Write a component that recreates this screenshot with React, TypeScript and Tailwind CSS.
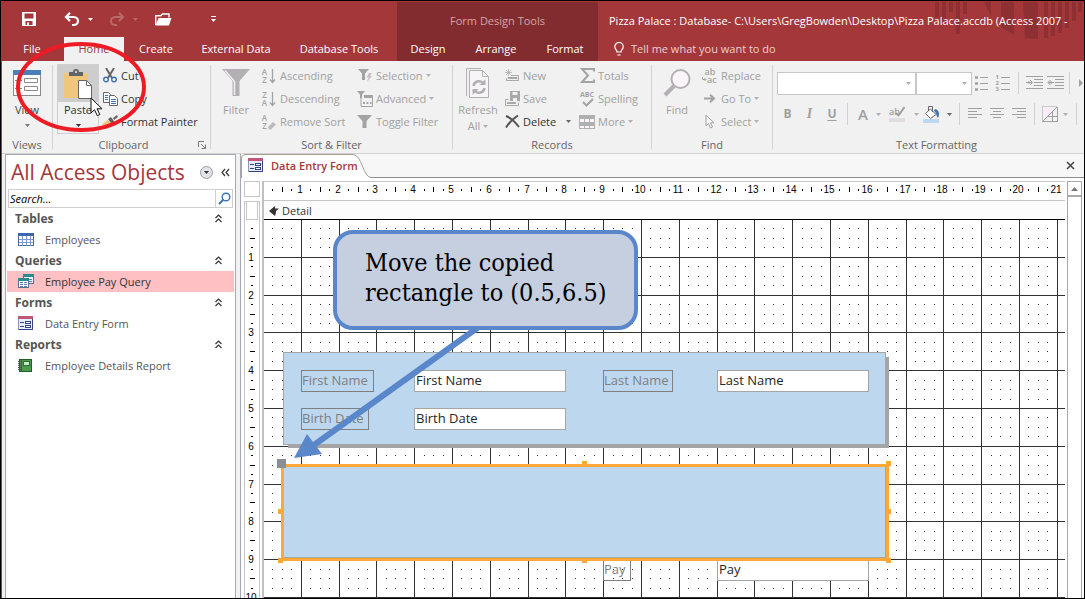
import type { ReactNode } from 'react'

const CM = 37.8

const navGroups = [
  { title: 'Tables', item: 'Employees', icon: 'table' },
  { title: 'Queries', item: 'Employee Pay Query', icon: 'query', selected: true },
  { title: 'Forms', item: 'Data Entry Form', icon: 'form' },
  { title: 'Reports', item: 'Employee Details Report', icon: 'report' },
]

function Caret({ className = 'text-[#b0b0b0]' }: { className?: string }) {
  return (
    <svg width="5" height="3" viewBox="0 0 5 3" className={`shrink-0 ${className}`}>
      <path d="M0 0h5L2.5 3z" fill="currentColor" />
    </svg>
  )
}

function Chevrons({ left = false }: { left?: boolean }) {
  return (
    <svg width="9" height="9" viewBox="0 0 9 9" fill="none" stroke="#333" strokeWidth="1.2">
      {left ? <path d="M4 1L1 4.5L4 8M8 1L5 4.5L8 8" /> : <path d="M1.5 4L4.5 1L7.5 4M1.5 8L4.5 5L7.5 8" />}
    </svg>
  )
}

function NavIcon({ type }: { type: string }) {
  if (type === 'table') {
    return (
      <svg width="16" height="14" viewBox="0 0 16 14">
        <rect x=".5" y=".5" width="15" height="12" fill="#fff" stroke="#4a68a0" />
        <rect x="0" y="0" width="16" height="3" fill="#3f66ad" />
        <path d="M1 6.5h14M1 9.5h14M4.5 3v10M8.5 3v10M12.5 3v10" stroke="#7d98c6" />
      </svg>
    )
  }
  if (type === 'query') {
    return (
      <svg width="16" height="15" viewBox="0 0 16 15">
        <rect x="5.5" y=".5" width="10" height="9" fill="#e8f0fa" stroke="#5b7090" />
        <rect x="5" y="0" width="11" height="3" fill="#2a8a8c" />
        <path d="M7 5.5h7M7 7.5h7" stroke="#5b7fae" />
        <rect x=".5" y="4.5" width="10" height="9" fill="#fff" stroke="#5b7090" />
        <rect x="0" y="4" width="11" height="3" fill="#2a8a8c" />
        <path d="M2 8.5h3M6 8.5h3M2 10.5h3M6 10.5h3M2 12.5h3M6 12.5h3" stroke="#5b7fae" />
      </svg>
    )
  }
  if (type === 'report') {
    return (
      <svg width="14" height="14" viewBox="0 0 14 14">
        <rect x="1.5" y=".5" width="12" height="12" fill="#4c9a4c" stroke="#22602b" />
        <rect x="5.5" y="2.5" width="6" height="4" fill="#cfe8c8" stroke="#2c6b33" />
        <path d="M3.5 1v11" stroke="#2c6b33" />
        <path d="M0 2.5h3M0 4.5h3M0 6.5h3M0 8.5h3M0 10.5h3" stroke="#555" />
      </svg>
    )
  }
  return (
    <svg width="16" height="15" viewBox="0 0 16 15">
      <rect x=".5" y=".5" width="14" height="13" fill="#e6ecfa" stroke="#8795bd" />
      <path d="M14.5 3v10.500H1" stroke="#33447e" fill="none" />
      <rect x="0" y="0" width="15" height="3" fill="#c2557c" />
      <path d="M2 6.500h4M2 10.500h4" stroke="#33447e" />
      <rect x="7.500" y="5.500" width="5" height="2" fill="#fff" stroke="#33447e" />
      <rect x="7.500" y="9.500" width="5" height="2" fill="#fff" stroke="#33447e" />
    </svg>
  )
}

function Tab({ width, children, active = false }: { width: string; children: ReactNode; active?: boolean }) {
  return (
    <button className={`h-full shrink-0 text-center ${width} ${active ? 'bg-[#f1f1f1] text-[#a4373a]' : 'text-white'}`}>
      {children}
    </button>
  )
}

function TitleBar() {
  return (
    <header className="flex h-[60px] shrink-0 bg-[#a4373a]">
      <div className="flex w-[395px] shrink-0 flex-col">
        <div className="flex h-9 items-center pl-5 text-white">
          <button aria-label="Save">
            <svg width="14" height="14" viewBox="0 0 14 14">
              <path d="M0 0h14v14H0z" fill="#fff" />
              <path d="M2.500 1.500h9v5h-9zM3.500 9h7v4h-7z" fill="#a4373a" />
              <path d="M5 10.500h2V13H5z" fill="#fff" />
            </svg>
          </button>
          <button aria-label="Undo" className="ml-7 flex items-center gap-2">
            <svg width="16" height="14" viewBox="0 0 16 14" fill="none" stroke="#fff" strokeWidth="2.2">
              <path d="M6 0.8L2 5L6 9M2.2 5H9.5C15.5 5 15.5 13 9.5 13H8" />
            </svg>
            <Caret className="text-white" />
          </button>
          <button aria-label="Redo" className="ml-4 flex items-center gap-2">
            <svg width="16" height="14" viewBox="0 0 16 14" fill="none" stroke="#bd686a" strokeWidth="2">
              <path d="M10 0.8L14 5L10 9M13.8 5H6.5C.5 5 .5 13 6.5 13H8" />
            </svg>
            <Caret className="text-[#bd686a]" />
          </button>
          <button aria-label="Open" className="ml-[17px]">
            <svg width="17" height="13" viewBox="0 0 17 13">
              <path d="M.7 12V2.7h5L7.500 1h6.500v3.500" fill="none" stroke="#fff" strokeWidth="1.4" />
              <path d="M3.500 5H16.500L14 12.500H.5z" fill="#fff" />
            </svg>
          </button>
          <button aria-label="Customize Quick Access Toolbar" className="ml-[39px] flex flex-col items-center gap-0.5">
            <span className="h-px w-[5px] bg-white" />
            <Caret className="text-white" />
          </button>
        </div>
        <nav className="flex h-6 pl-2">
          <Tab width="w-[44px]">File</Tab>
          <span className="w-2.5" />
          <Tab width="w-[60px]" active>Home</Tab>
          <Tab width="w-[64px]">Create</Tab>
          <Tab width="w-[96px]">External Data</Tab>
          <Tab width="w-[110px]">Database Tools</Tab>
        </nav>
      </div>

      <div className="mt-px flex w-[201px] shrink-0 flex-col bg-[#822c2f]">
        <p className="flex h-[35px] items-center justify-center pt-0.5 text-[#d5a3a4]">Form Design Tools</p>
        <nav className="flex h-6">
          <Tab width="w-[62px]">Design</Tab>
          <Tab width="w-[74px]">Arrange</Tab>
          <Tab width="w-[64px]">Format</Tab>
        </nav>
      </div>

      <div className="relative flex min-w-0 flex-1 flex-col">
        <svg width="149" height="38" viewBox="0 0 149 38" className="absolute top-px right-0" fill="#8e3033">
          <path d="M0 0h4v15H0zM7 0h4v21H7zM14 0h4v10h-4zM21 0h4v32h-4zM28 0h4v12h-4zM49 0h7v14zM66 0h13v33l-13-8zM88 0h15v37l-13-1zM109 0h4v36h-4zM116 0h4v34h-4zM123 0h4v31h-4zM130 0h4v26h-4zM137 0h4v19h-4zM143 0h4v10h-4z" />
        </svg>
        <h1 className="relative flex h-9 items-center overflow-hidden pt-1 pl-[11px] whitespace-nowrap text-white">
          Pizza Palace : Database- C:\Users\GregBowden\Desktop\Pizza Palace.accdb (Access 2007 -
        </h1>
        <button className="flex h-6 items-center gap-[7px] pl-4 text-[#edcfd0]">
          <svg width="10" height="14" viewBox="0 0 10 14" fill="none" stroke="#fff" strokeWidth="1.2">
            <path d="M3 10C3 8 .8 7.300 .8 4.700a4.200 4.200 0 0 1 8.400 0C9.200 7.300 7 8 7 10zM3.300 13h3.400" />
          </svg>
          Tell me what you want to do
        </button>
      </div>
    </header>
  )
}

function Group({ label, width, children, launcher = false }: { label: string; width: string; children: ReactNode; launcher?: boolean }) {
  return (
    <section className={`flex shrink-0 ${width}`}>
      <div className="flex min-w-0 flex-1 flex-col">
        <div className="flex h-[74px] pt-[3px]">{children}</div>
        <div className="flex h-[18px] items-center justify-center pt-px text-[#666]">
          <span className={launcher ? 'flex-1 pr-1 text-center' : ''}>{label}</span>
          {launcher && (
            <button aria-label="Clipboard options" className="mr-1">
              <svg width="8" height="8" viewBox="0 0 8 8" fill="none" stroke="#777">
                <path d="M.5 6V.5H6M3 3l4 4M7.500 3.500v4h-4" />
              </svg>
            </button>
          )}
        </div>
      </div>
      <div className="my-1 w-px bg-[#d2d2d2]" />
    </section>
  )
}

function Small({ icon, children, caret = false, dark = false }: { icon: ReactNode; children: ReactNode; caret?: boolean; dark?: boolean }) {
  return (
    <button className={`flex h-[23px] items-center gap-[3px] whitespace-nowrap ${dark ? 'text-[#333]' : 'text-[#a0a0a0]'}`}>
      <span className="flex w-4 shrink-0 justify-center">{icon}</span>
      <span>{children}</span>
      {caret && <Caret />}
    </button>
  )
}

function Large({ icon, children, dark = false }: { icon: ReactNode; children: ReactNode; dark?: boolean }) {
  return (
    <button className={`flex w-[50px] shrink-0 flex-col items-center ${dark ? 'text-[#444]' : 'text-[#a0a0a0]'}`}>
      <span className="flex h-[38px] items-center">{icon}</span>
      {children}
    </button>
  )
}

function SortIcon({ top, bottom, eraser = false }: { top: string; bottom: string; eraser?: boolean }) {
  return (
    <span className="flex w-4">
      <span className="flex w-[7px] flex-col text-center text-[8px] leading-[8px] font-semibold text-[#a3a3a3]">
        <span>{top}</span>
        <span>{bottom}</span>
      </span>
      <svg width="9" height="16" viewBox="0 0 9 16">
        {eraser ? (
          <path d="M0 13l5-5l3 2.500l-5 5H1z" fill="#bbb" />
        ) : (
          <path d="M4.500 1v13M2 11.500l2.500 3l2.500-3" fill="none" stroke="#a3a3a3" strokeWidth="1.300" />
        )}
      </svg>
    </span>
  )
}

function Funnel({ extra }: { extra?: 'bolt' | 'window' }) {
  if (extra === 'window') {
    return (
      <svg width="16" height="16" viewBox="0 0 16 16">
        <path d="M0 0h8L5 3.500V7H3V3.500z" fill="#a3a3a3" />
        <path d="M4 7v8.500h11.500v-11H8" fill="none" stroke="#a3a3a3" />
        <path d="M7 4h8.500v3H7zM6 11h2v2H6zM9.500 11h2v2h-2zM13 11h1.500v2H13z" fill="#a3a3a3" />
      </svg>
    )
  }
  return (
    <svg width="16" height="15" viewBox="0 0 16 15">
      <path d={extra ? 'M1 1h11L8 5.500V12H5V5.500z' : 'M0 1h15L9.500 7v7h-4V7z'} fill="#a3a3a3" />
      {extra && <path d="M12 5h3l-2 3h2l-5 6l1.500-4.500H9.500z" fill="#c5c0c5" />}
    </svg>
  )
}

function Lines({ rows }: { rows: string }) {
  return (
    <svg width="18" height="14" viewBox="0 0 18 14" fill="none" stroke="#a0a0a0" strokeWidth="1">
      <path d={rows} />
    </svg>
  )
}

function Divider() {
  return <span className="h-[22px] w-px shrink-0 bg-[#d0d0d0]" />
}

function Ribbon() {
  return (
    <div className="flex h-[93px] shrink-0 overflow-hidden border-b border-[#d2d2d2] bg-[#f1f1f1]">
      <Group label="Views" width="w-[51px]">
        <Large
          dark
          icon={
            <svg width="28" height="26" viewBox="0 0 28 26" fill="none" stroke="#8a8a8a">
              <rect x=".5" y=".5" width="27" height="25" fill="#fff" />
              <path d="M0 0h28v5H0z" fill="#4a7fb8" stroke="none" />
              <path d="M2 10.500h7M2 18.500h7M11.500 8.500h13v4h-13zM11.500 16.500h13v4h-13z" />
            </svg>
          }
        >
          View
          <Caret className="mt-1.5 text-[#777]" />
        </Large>
      </Group>

      <Group label="Clipboard" width="w-[158px]" launcher>
        <button className="ml-1 flex h-[70px] w-[42px] shrink-0 flex-col items-center border border-[#cfcfcf] text-[#333]">
          <span className="flex h-[37px] w-full items-center justify-center bg-[#cdcdcd]">
            <svg width="28" height="30" viewBox="0 0 28 30">
              <path d="M0 4h24v25H0z" fill="#eec77c" />
              <path d="M5 7V3h4a3 3 0 0 1 6 0h4v4z" fill="#5f6368" />
              <circle cx="12" cy="3" r="1.200" fill="#cdcdcd" />
              <path d="M14.500 11.500h8l5 5v13h-13z" fill="#fff" stroke="#666" />
              <path d="M22.500 11.500v5h5" fill="none" stroke="#666" />
            </svg>
          </span>
          Paste
          <Caret className="mt-1.5 text-[#333]" />
        </button>
        <div className="ml-[3px] flex flex-col">
          <Small
            dark
            icon={
              <svg width="14" height="15" viewBox="0 0 14 15" fill="none">
                <path d="M3 0l6 10M11 0L5 10" stroke="#666" strokeWidth="2" />
                <circle cx="3" cy="11.500" r="2.300" stroke="#3f74ae" strokeWidth="1.400" />
                <circle cx="11" cy="11.500" r="2.300" stroke="#3f74ae" strokeWidth="1.400" />
              </svg>
            }
          >
            Cut
          </Small>
          <Small
            dark
            icon={
              <svg width="15" height="14" viewBox="0 0 15 14" fill="#fff" stroke="#666">
                <path d="M.5.5h5l2 2v8h-7z" />
                <path d="M6.500 3.500h5l3 3v7h-8z" />
                <path d="M2 3.500h3M2 5.500h3M2 7.500h3M8 7.500h5M8 9.500h5M8 11.500h5" stroke="#3f74ae" />
              </svg>
            }
          >
            Copy
          </Small>
          <Small
            dark
            icon={
              <svg width="16" height="14" viewBox="0 0 16 14">
                <path d="M0 9l6-4l4 5l-5 4z" fill="#eec77c" />
                <path d="M6 4l3-2l5 7l-3 2zM11 3l4-3l1 2l-4 3z" fill="#666" />
              </svg>
            }
          >
            Format Painter
          </Small>
        </div>
      </Group>

      <Group label="Sort & Filter" width="w-[242px]">
        <Large
          icon={
            <svg width="28" height="28" viewBox="0 0 28 28">
              <path d="M0 0h28L17.500 12v15h-7V12z" fill="#b3b0b3" />
              <path d="M3 1.500L12.500 12.500V26" fill="none" stroke="#efefef" strokeWidth="1.500" />
            </svg>
          }
        >
          Filter
        </Large>
        <div className="flex w-24 shrink-0 flex-col">
          <Small icon={<SortIcon top="A" bottom="Z" />}>Ascending</Small>
          <Small icon={<SortIcon top="Z" bottom="A" />}>Descending</Small>
          <Small icon={<SortIcon top="A" bottom="Z" eraser />}>Remove Sort</Small>
        </div>
        <div className="flex flex-col">
          <Small caret icon={<Funnel extra="bolt" />}>Selection</Small>
          <Small caret icon={<Funnel extra="window" />}>Advanced</Small>
          <Small icon={<Funnel />}>Toggle Filter</Small>
        </div>
      </Group>

      <Group label="Records" width="w-[199px]">
        <Large
          icon={
            <svg width="26" height="31" viewBox="0 0 26 31" fill="none" stroke="#b3b0b3">
              <path d="M16 .5H1.500V28" />
              <path d="M4.500 2.500h13l6 6v21h-19z" fill="#f8f5f8" />
              <path d="M17.500 2.500v6h6" />
              <path d="M8.500 18a5.500 5.500 0 0 1 9.500-3M19.500 20a5.500 5.500 0 0 1-9.500 3" strokeWidth="2.500" />
              <path d="M20.500 11v6h-6zM7.500 27v-6h6z" fill="#b3b0b3" stroke="none" />
            </svg>
          }
        >
          Refresh
          <span className="flex items-center gap-[3px]">All <Caret /></span>
        </Large>
        <div className="ml-px flex w-[75px] shrink-0 flex-col">
          <Small
            icon={
              <svg width="14" height="13" viewBox="0 0 14 13" fill="none" stroke="#a8a8a8">
                <path d="M3.500 0v7M0 3.500h7M1 1l5 5M6 1L1 6" strokeWidth=".7" />
                <path d="M6 6.500h7.500v5h-12v-2" />
                <path d="M3 8.500h9v1H3z" fill="#a8a8a8" />
              </svg>
            }
          >
            New
          </Small>
          <Small
            icon={
              <svg width="15" height="15" viewBox="0 0 15 15">
                <path d="M5 0h10v10H5z" fill="#a8a8a8" />
                <path d="M7.500 1h5v3h-5zM8 7h4v3H8z" fill="#f1f1f1" />
                <path d="M3.500 8.500h-3v6h13v-3" fill="none" stroke="#a8a8a8" />
                <path d="M2 11h9v2H2z" fill="#a8a8a8" />
              </svg>
            }
          >
            Save
          </Small>
          <div className="flex items-center justify-between pr-2">
            <Small
              dark
              icon={
                <svg width="15" height="13" viewBox="0 0 15 13" fill="none" stroke="#555" strokeWidth="2">
                  <path d="M1 1c5 2 9 6 13 11M13 .5C9 3 4 8 1 12.500" />
                </svg>
              }
            >
              Delete
            </Small>
            <button aria-label="Delete options"><Caret className="text-[#666]" /></button>
          </div>
        </div>
        <div className="flex flex-col">
          <Small
            icon={
              <svg width="15" height="15" viewBox="0 0 15 15" fill="none" stroke="#a3a3a3" strokeWidth="2">
                <path d="M14 3.500V1H2l6 6.500L2 14h12v-2.500" />
              </svg>
            }
          >
            Totals
          </Small>
          <Small
            icon={
              <span className="flex flex-col items-center">
                <span className="text-[7px] leading-[7px] font-bold text-[#a3a3a3]">ABC</span>
                <svg width="13" height="9" viewBox="0 0 13 9">
                  <path d="M2 4l3.500 3.500L12 1" fill="none" stroke="#a3a3a3" strokeWidth="2" />
                </svg>
              </span>
            }
          >
            Spelling
          </Small>
          <Small
            caret
            icon={
              <svg width="16" height="14" viewBox="0 0 16 14" fill="none" stroke="#b0b0b0">
                <rect x=".5" y=".5" width="15" height="13" fill="#faf6fa" />
                <path d="M0 0h16v4H0zM0 7.500h16v3H0z" fill="#b0b0b0" stroke="none" />
                <path d="M0 7.500h16M0 10.500h16M5.500 4v10M10.500 4v10" />
              </svg>
            }
          >
            More
          </Small>
        </div>
      </Group>

      <Group label="Find" width="w-[121px]">
        <Large
          icon={
            <svg width="28" height="28" viewBox="0 0 28 28" fill="none" stroke="#b3b0b3">
              <circle cx="17.500" cy="10" r="9" fill="#f9f5f9" strokeWidth="2" />
              <path d="M11 17L2 26" strokeWidth="4" />
            </svg>
          }
        >
          Find
        </Large>
        <div className="flex flex-col">
          <Small
            icon={
              <span className="flex w-4 flex-col text-[9px] leading-[8px] font-semibold text-[#a3a3a3]">
                <span>ab</span>
                <span className="flex items-center">
                  <svg width="5" height="6" viewBox="0 0 5 6" fill="none" stroke="#a3a3a3" className="shrink-0">
                    <path d="M.5 0v2.500h3M2.500 1l1.500 1.500L2.500 4" />
                  </svg>
                  ac
                </span>
              </span>
            }
          >
            Replace
          </Small>
          <Small
            caret
            icon={
              <svg width="12" height="9" viewBox="0 0 12 9" fill="none" stroke="#a3a3a3" strokeWidth="2">
                <path d="M0 4.500h10M6 .8l4 3.700l-4 3.700" />
              </svg>
            }
          >
            Go To
          </Small>
          <Small
            caret
            icon={
              <svg width="10" height="15" viewBox="0 0 10 15">
                <path d="M1 1v11l2.500-2.500l2 4.500l2-1l-2-4.200H9z" fill="#f8f5f8" stroke="#a3a3a3" />
              </svg>
            }
          >
            Select
          </Small>
        </div>
      </Group>

      <section className="flex min-w-0 flex-1 flex-col pl-1">
        <div className="mt-[10px] flex h-[24px] items-center">
          <label className="relative flex h-[23px] w-[139px] shrink-0 items-center border border-[#c6c6c6] bg-white">
            <span className="sr-only">Font</span>
            <select className="h-full w-full appearance-none bg-transparent outline-none" />
            <span className="absolute right-1"><Caret /></span>
          </label>
          <label className="relative flex h-[23px] w-[56px] shrink-0 items-center border border-[#c6c6c6] bg-white">
            <span className="sr-only">Font Size</span>
            <select className="h-full w-full appearance-none bg-transparent outline-none" />
            <span className="absolute right-1"><Caret /></span>
          </label>
          <button aria-label="Bullets" className="ml-[2px] w-[22px]">
            <svg width="16" height="16" viewBox="0 0 16 16" stroke="#a0a0a0" fill="none">
              <path d="M6 2.500h8M6 8.500h8M6 14.500h8" />
              <path d="M1 2.500h3M1 8.500h3M1 14.500h3" strokeWidth="2.500" />
            </svg>
          </button>
          <button aria-label="Numbering" className="flex w-[25px]">
            <span className="flex w-[5px] flex-col text-[6px] leading-[6px] font-bold text-[#a0a0a0]">
              <span>1</span>
              <span>2</span>
              <span>3</span>
            </span>
            <svg width="10" height="18" viewBox="0 0 10 18" stroke="#a0a0a0">
              <path d="M1 3.500h9M1 9.500h9M1 15.500h9" />
            </svg>
          </button>
          <Divider />
          <button aria-label="Increase indent" className="ml-[7px] w-[22px]">
            <Lines rows="M0 .5h17M8 3.500h9M8 6.500h9M8 9.500h9M0 12.500h17M0 6.500h6M4 4l2.500 2.500L4 9M3 5v3" />
          </button>
          <button aria-label="Decrease indent" className="w-[23px]">
            <Lines rows="M0 .5h17M8 3.500h9M8 6.500h9M8 9.500h9M0 12.500h17M1 6.500h6M3.500 4L1 6.500L3.500 9M4 5v3" />
          </button>
          <Divider />
          <button aria-label="Text direction" className="ml-2 shrink-0 text-[#a0a0a0]">
            <svg width="6" height="8" viewBox="0 0 6 8"><path d="M1 0l4 4l-4 4z" fill="currentColor" /></svg>
          </button>
        </div>
        <div className="mt-[7px] flex h-[24px] items-center text-[#a0a0a0]">
          <button className="w-[21px] shrink-0 text-[12px] font-bold">B</button>
          <button className="w-[23px] shrink-0 font-['Liberation_Serif',serif] text-[14px] font-bold italic">I</button>
          <button className="w-[22px] shrink-0 text-[12px] font-bold underline underline-offset-2">U</button>
          <span className="w-1" />
          <Divider />
          <button aria-label="Font color" className="flex w-[38px] shrink-0 items-center gap-2 pl-2.5 text-[15px] font-semibold">A <Caret /></button>
          <button aria-label="Highlight" className="flex w-[34px] shrink-0 items-center gap-2 pl-[3px]">
            <span className="flex w-[17px] flex-col text-[9px] leading-[12px] font-semibold">
              <span className="flex h-3">
                ab
                <svg width="9" height="12" viewBox="0 0 9 12" className="-ml-1 shrink-0">
                  <path d="M8.500 1L3 9M0 7l3 3" stroke="#a0a0a0" strokeWidth="2" fill="none" />
                </svg>
              </span>
              <span className="h-1 w-4 bg-[#e2dce2]" />
            </span>
            <Caret />
          </button>
          <button aria-label="Background color" className="flex w-[35px] shrink-0 items-center gap-[7px] pl-[3px]">
            <svg width="17" height="17" viewBox="0 0 17 17">
              <path d="M12 3c4 1 5 5 3 9c-2-2-1-5-4-7z" fill="#3f74ae" />
              <path d="M7.500 3L13 8.500L7.500 12.500L2.500 7.500z" fill="#fff" stroke="#666" />
              <path d="M5.500 5V.5h4V6" fill="none" stroke="#666" />
              <path d="M0 13h16v4H0z" fill="#bdd7ee" />
            </svg>
            <Caret className="text-[#666]" />
          </button>
          <span className="w-1" />
          <Divider />
          <button aria-label="Align left" className="ml-2 w-[22px]"><Lines rows="M0 1.500h14M0 4.500h9M0 7.500h14M0 10.500h9" /></button>
          <button aria-label="Center" className="w-[22px]"><Lines rows="M0 1.500h14M3 4.500h8M0 7.500h14M3 10.500h8" /></button>
          <button aria-label="Align right" className="w-[22px]"><Lines rows="M0 1.500h14M5 4.500h9M0 7.500h14M5 10.500h9" /></button>
          <Divider />
          <button aria-label="Gridlines" className="ml-[7px] flex w-[34px] shrink-0 items-center gap-[5px]">
            <svg width="16" height="16" viewBox="0 0 16 16" fill="none" stroke="#a0a0a0">
              <path d="M1 1h14L1 15z" fill="#f8eef8" stroke="none" />
              <path d="M.5 15.500V.5h15" strokeDasharray="1 1" />
              <path d="M0 15.500h15.500V1M15 1L1 15M10.500 6v9M6 10.500h9" />
            </svg>
            <Caret />
          </button>
          <Divider />
        </div>
        <div className="mt-[9px] flex h-[18px] items-center justify-center pt-px pl-3 text-[#666]">Text Formatting</div>
      </section>
    </div>
  )
}

function NavPane() {
  return (
    <aside className="ml-[3px] flex w-[231px] shrink-0 flex-col border-x border-t border-[#a3a9b5] bg-white">
      <div className="flex h-[34px] items-center pl-[5px]">
        <h2 className="flex-1 text-[21px] leading-[34px] whitespace-nowrap text-[#a4373a]">All Access Objects</h2>
        <button aria-label="Category" className="mr-2 flex size-[13px] items-center justify-center rounded-full border border-[#9a9ca4] bg-[#e2e3e8]">
          <Caret className="text-[#333]" />
        </button>
        <button aria-label="Collapse pane" className="mr-[5px]"><Chevrons left /></button>
      </div>
      <div className="mr-[2px] ml-[2px] flex h-[19px] items-center border border-[#cfcfcf]">
        <input
          aria-label="Search"
          placeholder="Search..."
          className="h-full min-w-0 flex-1 px-px pb-px text-[11px] italic outline-none placeholder:text-black"
        />
        <button aria-label="Go" className="flex h-full w-[17px] items-center justify-center border-l border-[#cfcfcf]">
          <svg width="13" height="13" viewBox="0 0 13 13" fill="none" stroke="#3f74ae">
            <circle cx="8" cy="5" r="3.800" strokeWidth="1.400" />
            <path d="M5.500 7.500L1 12" strokeWidth="2" />
          </svg>
        </button>
      </div>
      <ul className="text-[#555]">
        {navGroups.map(g => (
          <li key={g.title}>
            <div className="flex h-[21px] items-center justify-between pr-[12px] pl-[9px]">
              <h3 className="text-[12px] font-bold">{g.title}</h3>
              <button aria-label={`Collapse ${g.title}`}><Chevrons /></button>
            </div>
            <button className={`mx-px flex h-[21px] w-[227px] items-center pl-[11px] ${g.selected ? 'bg-[#fec0c3] text-[#333]' : ''}`}>
              <span className="w-[27px]"><NavIcon type={g.icon} /></span>
              {g.item}
            </button>
          </li>
        ))}
      </ul>
    </aside>
  )
}

function HorizontalRuler() {
  const marks = Array.from({ length: 22 }, (_, n) => n)
  return (
    <svg width="100%" height="18" className="block fill-black font-['Liberation_Sans_Narrow','Liberation_Sans',sans-serif] text-[10px]" shapeRendering="crispEdges">
      {marks.map(n => {
        const x = n * CM - 0.5
        return (
          <g key={n}>
            {n > 0 && <text x={Math.floor(x) - 1} y="11" textAnchor="middle">{n}</text>}
            <rect x={Math.floor(x + CM / 4)} y="7" width="1" height="2" />
            <rect x={Math.floor(x + CM / 2)} y="5" width="1" height="5" />
            <rect x={Math.floor(x + CM * 0.75)} y="7" width="1" height="2" />
          </g>
        )
      })}
    </svg>
  )
}

function VerticalRuler() {
  const marks = Array.from({ length: 11 }, (_, n) => n)
  return (
    <svg width="14" height="420" className="block fill-black font-['Liberation_Sans_Narrow','Liberation_Sans',sans-serif] text-[10px]" shapeRendering="crispEdges">
      {marks.map(n => {
        const y = n * CM - 0.5
        return (
          <g key={n}>
            {n > 0 && <text x="6" y={Math.floor(y) + 4} textAnchor="middle">{n}</text>}
            <rect x="6" y={Math.floor(y + CM / 4)} width="2" height="1" />
            <rect x="5" y={Math.floor(y + CM / 2)} width="5" height="1" />
            <rect x="6" y={Math.floor(y + CM * 0.75)} width="2" height="1" />
          </g>
        )
      })}
    </svg>
  )
}

function DesignGrid() {
  let lines = ''
  let dots = ''
  for (let c = 0; c < 50; c++) {
    const x = c * CM - 0.5
    if (c > 0) lines += `M${Math.floor(x)} 0h1v1500h-1z`
    for (let r = 0; r < 28; r++) {
      const y = r * CM - 0.5
      for (let i = 1; i < 4; i++) {
        for (let j = 1; j < 4; j++) {
          dots += `M${Math.floor(x + (i * CM) / 4)} ${Math.floor(y + (j * CM) / 4)}h1v1h-1z`
        }
      }
    }
  }
  for (let r = 1; r < 28; r++) lines += `M0 ${Math.floor(r * CM - 0.5)}h2000v1H0z`
  return (
    <svg width="2000" height="1500" className="absolute top-0 left-0" shapeRendering="crispEdges">
      <path d={lines} fill="#333" />
      <path d={dots} fill="#333" />
    </svg>
  )
}

function FieldLabel({ id, place, children }: { id: string; place: string; children: string }) {
  return (
    <label htmlFor={id} className={`absolute h-[22px] border border-[#7f7f7f] text-[13px] leading-[18px] whitespace-nowrap text-[#7f7f7f] ${place}`}>
      {children}
    </label>
  )
}

function Field({ id, place, value }: { id: string; place: string; value: string }) {
  return (
    <input
      id={id}
      defaultValue={value}
      className={`absolute h-[22px] w-[152px] border border-[#a5a5a5] bg-white px-px pb-0.5 text-[13px] text-[#262626] outline-none ${place}`}
    />
  )
}

const handles = [
  'left-[318px] top-[241px]',
  'left-[622px] top-[241px]',
  'left-[14px] top-[289px]',
  'left-[622px] top-[289px]',
  'left-[14px] top-[338px]',
  'left-[318px] top-[338px]',
  'left-[622px] top-[338px]',
]

function Canvas() {
  return (
    <div className="relative min-h-0 flex-1 overflow-hidden bg-white">
      <DesignGrid />
      <div className="absolute top-[137px] left-[24px] h-[91px] w-[601px] bg-[#a5a5a5]" />
      <div className="absolute top-[132px] left-[19px] h-[93px] w-[603px] border border-[#a5a5a5] bg-[#bdd7ee]" />
      <FieldLabel id="first" place="left-[37px] top-[150px] w-[73px]">First Name</FieldLabel>
      <Field id="first" place="left-[150px] top-[150px]" value="First Name" />
      <FieldLabel id="last" place="left-[339px] top-[150px] w-[70px]">Last Name</FieldLabel>
      <Field id="last" place="left-[453px] top-[150px]" value="Last Name" />
      <FieldLabel id="birth" place="left-[37px] top-[188px] w-[68px]">Birth Date</FieldLabel>
      <Field id="birth" place="left-[150px] top-[188px]" value="Birth Date" />
      <FieldLabel id="pay" place="left-[339px] top-[339px] w-[28px]">Pay</FieldLabel>
      <Field id="pay" place="left-[453px] top-[339px]" value="Pay" />

      <div className="absolute top-[244px] left-[17px] h-[97px] w-[608px] border-3 border-[#ffa83a] bg-[#bdd7ee]">
        <div className="h-full border-r border-b border-[#a5a5a5]" />
      </div>
      {handles.map(h => <span key={h} className={`absolute size-[5px] bg-[#ffa83a] ${h}`} />)}
      <span className="absolute top-[239px] left-[13px] size-[9px] bg-[#8a8f96]" />

      <svg width="240" height="140" viewBox="0 0 240 140" className="absolute top-[105px] left-0">
        <path d="M216 1L50 120" stroke="#5a87ca" strokeWidth="6" />
        <path d="M43 109L30 133L58 129z" fill="#5a87ca" />
      </svg>
      <div className="absolute top-[10px] left-[69px] h-[100px] w-[305px] rounded-[20px] border-4 border-[#5a87ca] bg-[#c6cfe0] pt-[14px] pl-7 font-['DejaVu_Serif_Condensed','DejaVu_Serif',serif] text-[25px] leading-[30px] whitespace-nowrap text-black">
        <p>Move the copied</p>
        <p>rectangle to (0.5,6.5)</p>
      </div>
    </div>
  )
}

function Workspace() {
  return (
    <main className="flex min-w-0 flex-1 flex-col bg-white">
      <div className="flex h-6 shrink-0 items-stretch border-b border-[#8e8e94] bg-[#f7f7f7]">
        <button className="relative flex w-[130px] items-center gap-[7px] pl-[7px] font-semibold text-[#a4373a]">
          <svg width="130" height="24" viewBox="0 0 130 24" className="absolute top-0 left-0 overflow-visible">
            <path d="M.5 24V5C.5 2 2 .5 5 .5H112C121 .5 122 23.500 130 23.500V24.500H1z" fill="#fff" />
            <path d="M.5 24V5C.5 2 2 .5 5 .5H112C121 .5 122 23.500 130 23.500" fill="none" stroke="#a89f94" />
          </svg>
          <span className="relative shrink-0"><NavIcon type="form" /></span>
          <span className="relative whitespace-nowrap">Data Entry Form</span>
        </button>
        <button aria-label="Close" className="mr-[9px] ml-auto">
          <svg width="9" height="9" viewBox="0 0 9 9" stroke="#444" strokeWidth="1.500"><path d="M1 1l7 7M8 1L1 8" /></svg>
        </button>
      </div>
      <div className="flex min-h-0 flex-1 pt-[3px] pl-[3px]">
        <div className="flex w-4 shrink-0 flex-col">
          <div className="h-4 shrink-0 border border-[#c6c6c6]" />
          <div className="mt-1 min-h-0 flex-1 overflow-hidden border border-b-0 border-[#c6c6c6]">
            <div className="mx-px h-[18px] border border-t-0 border-[#c6c6c6]" />
            <VerticalRuler />
          </div>
        </div>
        <div className="ml-[2px] flex min-w-0 flex-1 flex-col border-l-2 border-[#c0c0c0]">
          <div className="h-5 shrink-0 border-y border-[#c6c6c6]"><HorizontalRuler /></div>
          <div className="flex h-[19px] shrink-0 items-center gap-[3px] border-b border-black bg-[#fcfcfc] pt-0.5 pl-[5px] text-[#333]">
            <svg width="10" height="10" viewBox="0 0 10 10"><path d="M0 5L6 0v2.500h4L7 5v1.500L6 10z" fill="#333" /></svg>
            Detail
          </div>
          <Canvas />
        </div>
        <div className="mr-[2px] ml-[2px] flex w-[15px] shrink-0 flex-col border border-b-0 border-[#a8a8a8]">
          <button aria-label="Scroll up" className="flex h-[15px] items-center justify-center border-b-2 border-[#a8a8a8]">
            <svg width="7" height="4" viewBox="0 0 7 4"><path d="M0 4L3.500 0L7 4z" fill="#777" /></svg>
          </button>
        </div>
      </div>
    </main>
  )
}

export default function App() {
  return (
    <div className="relative h-screen overflow-hidden border border-black bg-[#f1f1f1] font-['Open_Sans','Noto_Sans',sans-serif] text-[11px] leading-[16px]">
      <div className="flex h-full flex-col border-l border-[#a4373a]">
        <TitleBar />
        <Ribbon />
        <div className="flex min-h-0 flex-1">
          <NavPane />
          <div className="w-[5px] shrink-0 border-r border-[#a3a9b5]" />
          <Workspace />
        </div>
      </div>

      <svg width="136" height="96" viewBox="0 0 136 96" className="pointer-events-none absolute top-[38px] left-3" fill="none">
        <ellipse cx="68" cy="48" rx="63" ry="43" stroke="#ed1c24" strokeWidth="4" />
      </svg>
      <svg width="13" height="20" viewBox="0 0 13 20" className="pointer-events-none absolute top-[96px] left-[89px]">
        <path d="M1 1v15l3.500-3.300l2.800 6l2.500-1.200L7 11.800h5z" fill="#fff" stroke="#111" />
      </svg>
    </div>
  )
}
